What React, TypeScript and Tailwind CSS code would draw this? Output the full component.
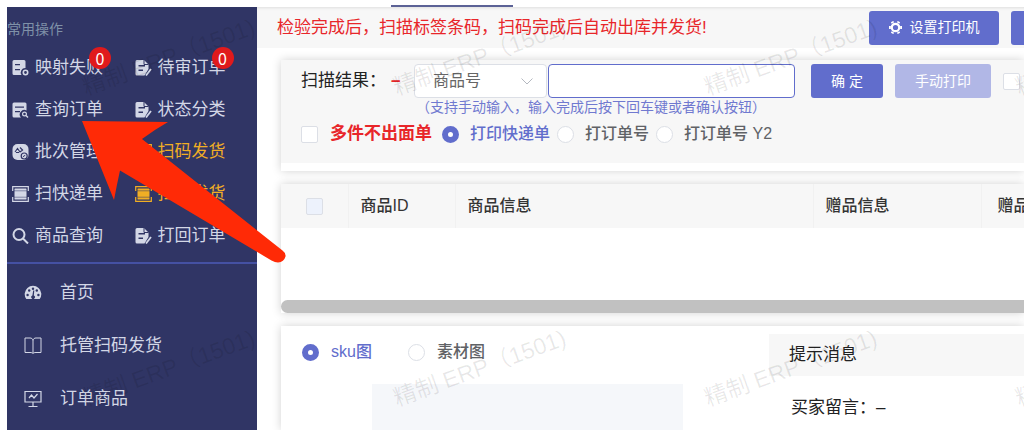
import { ReactNode, useState } from 'react';

type IconName = 'mapping' | 'order' | 'search-doc' | 'batch' | 'scan' | 'search';

interface QuickLink {
  label: string;
  icon: IconName;
  badge?: number;
  highlight?: boolean;
}

const quickLinks: QuickLink[] = [
  { label: '映射失败', icon: 'mapping', badge: 0 },
  { label: '待审订单', icon: 'order', badge: 0 },
  { label: '查询订单', icon: 'search-doc' },
  { label: '状态分类', icon: 'order' },
  { label: '批次管理', icon: 'batch' },
  { label: '扫码发货', icon: 'scan', highlight: true },
  { label: '扫快递单', icon: 'scan' },
  { label: '扫描发货', icon: 'scan', highlight: true },
  { label: '商品查询', icon: 'search' },
  { label: '打回订单', icon: 'order' },
];

const printModes = ['打印快递单', '打订单号', '打订单号 Y2'];

const quickIcons: Record<IconName, ReactNode> = {
  mapping: (
    <>
      <path fill="currentColor" fillRule="evenodd" d="M2 0h10a1.5 1.5 0 0 1 1.5 1.5V8a4.5 4.5 0 0 0-4 7H2A1.5 1.5 0 0 1 .5 13.5V1.5A1.5 1.5 0 0 1 2 0Zm1 4v1.2h5V4Zm0 5v1.2h5V9Z" />
      <circle cx="13.5" cy="12.5" r="2.2" fill="none" stroke="currentColor" strokeWidth="1.6" />
    </>
  ),
  order: (
    <>
      <path fill="currentColor" fillRule="evenodd" d="M2 0h7l4.5 4.5V9L9.5 15.5H2A1.5 1.5 0 0 1 .5 14V1.5A1.5 1.5 0 0 1 2 0Zm1.5 5v1.4H10V5Zm0 4.5v1.4H8V9.5Z" />
      <path d="M9 0v4.5h4.5" fill="none" stroke="#303565" />
      <path d="m11 15.5 5-6.5" fill="none" stroke="currentColor" strokeWidth="1.8" />
    </>
  ),
  'search-doc': (
    <>
      <path fill="currentColor" fillRule="evenodd" d="M2 .5h11A1.5 1.5 0 0 1 14.5 2v6.5A4.5 4.5 0 0 0 9 15.5H2A1.5 1.5 0 0 1 .5 14V2A1.5 1.5 0 0 1 2 .5Zm1 4v1.3h9V4.5Zm0 4.5v1.3h5V9Z" />
      <circle cx="12.5" cy="12" r="1.9" fill="none" stroke="currentColor" strokeWidth="1.2" />
      <path d="m14 13.5 2 2" stroke="currentColor" strokeWidth="1.4" />
    </>
  ),
  batch: (
    <>
      <rect x="0.5" y="0" width="16" height="16" rx="5" fill="currentColor" />
      <path d="M3 8 5.5 4.5 8 8l2-1.5M4 8.5h3M8 3.5l3 3" fill="none" stroke="#303565" strokeWidth="1.1" />
      <circle cx="12.2" cy="12" r="3" fill="none" stroke="#303565" strokeWidth="1.2" />
      <path d="m11 12.7 2.3-1.5" stroke="#303565" />
    </>
  ),
  scan: (
    <>
      <path d="M.7 5V.7h15.6V5M.7 11v4.3h15.6V11" fill="none" stroke="currentColor" strokeWidth="1.2" />
      <rect x="2.5" y="2.5" width="12" height="11" rx="0.5" fill="currentColor" />
      <path d="M2 4.8h13M2 11.2h13" stroke="#303565" strokeWidth="0.5" />
    </>
  ),
  search: (
    <g fill="none" stroke="currentColor" strokeWidth="2">
      <circle cx="7" cy="6.5" r="5.5" />
      <path d="m11 10.5 5 5" />
    </g>
  ),
};

const menuItems: { label: string; icon: ReactNode }[] = [
  {
    label: '首页',
    icon: (
      <>
        <path fill="currentColor" d="M2.3 15A8.3 8.3 0 1 1 15.7 15Z" />
        <g fill="#303565">
          <circle cx="3.6" cy="11" r="1.2" />
          <circle cx="5.2" cy="6.5" r="1.2" />
          <circle cx="9" cy="4.7" r="1.2" />
          <circle cx="12.8" cy="6.5" r="1.2" />
          <circle cx="14.4" cy="11" r="1.2" />
          <path d="M9.2 6.5h1.1l-.5 5a1.8 1.8 0 1 1-1.4 0Z" />
        </g>
      </>
    ),
  },
  {
    label: '托管扫码发货',
    icon: (
      <path
        d="M9 3.5v13M9 3.5C8.5 1.5 7.5 1 6 1H1v14.5h5c1.5 0 2.5.3 3 1 .5-.7 1.5-1 3-1h5V1h-5c-1.5 0-2.5.5-3 2.5Z"
        fill="none"
        stroke="currentColor"
      />
    ),
  },
  {
    label: '订单商品',
    icon: (
      <path
        d="M1 1.500h16v10.500H1ZM9 12v4.500M4.500 16.500h9M5 8l2.500-3L10 8l3.500-4"
        fill="none"
        stroke="currentColor"
        strokeWidth="1.2"
      />
    ),
  },
];

const radioClass =
  'size-[17px] shrink-0 appearance-none rounded-full border border-[#dcdfe6] bg-white checked:border-[6px] checked:border-[#616dcc]';
const checkboxClass = 'size-[17px] shrink-0 appearance-none rounded-[2px] border border-[#dcdfe6] bg-white';
const cardClass = 'bg-white shadow-[0_0_9px_rgba(0,0,0,0.18)]';

function Sidebar() {
  return (
    <aside className="w-[250px] shrink-0 bg-[#303565] text-[17px] text-[#d3d7e6]">
      <section className="border-b-2 border-[#4551a3] pb-[5px]">
        <h2 className="pt-3 pb-2 text-[14px] leading-[20px] text-[#7f91a8]">常用操作</h2>
        <nav className="grid grid-cols-2 pl-[5px]">
          {quickLinks.map((link) => (
            <a
              key={link.label}
              href="#"
              className={`relative flex h-[42px] items-center gap-[6px] whitespace-nowrap ${link.highlight ? 'text-[#f0ae24]' : ''}`}
            >
              <svg viewBox="0 0 17 16" className="h-[16px] w-[17px] shrink-0">
                {quickIcons[link.icon]}
              </svg>
              {link.label}
              {link.badge !== undefined && (
                <span className="absolute top-0 left-[77px] flex size-[22px] items-center justify-center rounded-full bg-[#e01a1c] font-['Noto_Sans_CJK_SC',sans-serif] text-[16px] leading-none text-white">
                  {link.badge}
                </span>
              )}
            </a>
          ))}
        </nav>
      </section>
      <nav className="pt-[2px] pb-[3px]">
        {menuItems.map((item) => (
          <a key={item.label} href="#" className="flex h-[53px] items-center gap-[18px] pl-[17px]">
            <svg viewBox="0 0 18 18" className="size-[18px] shrink-0">
              {item.icon}
            </svg>
            {item.label}
          </a>
        ))}
      </nav>
    </aside>
  );
}

function PageHeader() {
  return (
    <header className="flex h-[41px] items-center bg-[#f7f7f7] pl-5 shadow-[inset_0_3px_3px_-2px_rgba(0,0,0,0.1)]">
      <p className="flex-1 text-[17px] whitespace-nowrap text-[#e8262a]">
        检验完成后，扫描标签条码，扫码完成后自动出库并发货!
      </p>
      <button className="mr-3 flex h-[34px] w-[130px] shrink-0 items-center justify-center gap-2 rounded-[3px] bg-[#616dcc] text-[14px] text-white">
        <svg viewBox="0 0 14 14" className="size-[13px]" fill="none" stroke="currentColor">
          <circle cx="7" cy="7" r="4" strokeWidth="2.4" />
          <path d="M4.2 2.2 3.3.7M9.8 2.2l.9-1.5M12 7h2M9.8 11.8l.9 1.5M4.2 11.8l-.9 1.5M2 7H0" strokeWidth="3" />
        </svg>
        设置打印机
      </button>
      <button aria-label="更多" className="h-[34px] w-[13px] shrink-0 rounded-l-[3px] bg-[#616dcc]" />
    </header>
  );
}

function ScanForm() {
  const [mode, setMode] = useState(printModes[0]);

  return (
    <form className={cardClass} onSubmit={(e) => e.preventDefault()}>
      <div className="bg-[#f7f7f7] pt-1 pr-1 pb-3 pl-5">
        <div className="flex h-[34px] items-center">
          <label htmlFor="scan" className="w-[90px] shrink-0 text-[17px] whitespace-nowrap text-[#222]">
            扫描结果：
          </label>
          <span className="w-[23px] shrink-0 text-[17px] font-bold text-[#e8262a]">–</span>
          <div className="relative w-[133px] shrink-0">
            <select aria-label="类型" className="h-[34px] w-full appearance-none rounded-[4px] border border-[#dcdfe6] bg-white pl-[18px] text-[16px] text-[#666]">
              <option>商品号</option>
            </select>
            <svg viewBox="0 0 12 7" className="pointer-events-none absolute top-[14px] right-[14px] h-[7px] w-[12px]">
              <path d="m.5.5 5.5 5.5L11.5.5" fill="none" stroke="#b4b8c0" />
            </svg>
          </div>
          <input
            id="scan"
            type="text"
            className="ml-px h-[34px] min-w-0 flex-1 rounded-[4px] border border-[#616dcc] bg-white px-3 text-[16px] outline-none"
          />
          <button type="submit" className="ml-4 h-[34px] w-[72px] shrink-0 rounded-[3px] bg-[#616dcc] text-[14px] text-white">
            确 定
          </button>
          <button type="button" className="mx-3 h-[34px] w-[96px] shrink-0 rounded-[3px] bg-[#b1b7e6] text-[14px] text-white">
            手动打印
          </button>
          <input type="checkbox" aria-label="自动打印" className={checkboxClass} />
        </div>
        <p className="pl-[115px] text-[14px] leading-[19px] text-[#7079d0]">
          （支持手动输入，输入完成后按下回车键或者确认按钮）
        </p>
        <div className="flex h-[34px] items-center text-[16px] whitespace-nowrap text-[#606266]">
          <label className="mr-[10px] flex items-center gap-3 text-[17px] font-bold text-[#e8262a]">
            <input type="checkbox" className={checkboxClass} />
            多件不出面单
          </label>
          {printModes.map((item) => (
            <label
              key={item}
              className={`mr-[7px] flex items-center gap-[11px] font-medium ${mode === item ? 'text-[#616dcc]' : ''}`}
            >
              <input type="radio" name="mode" className={radioClass} checked={mode === item} onChange={() => setMode(item)} />
              {item}
            </label>
          ))}
        </div>
      </div>
      <div className="h-2" />
    </form>
  );
}

function GoodsTable() {
  return (
    <section className={cardClass}>
      <table className="w-full table-fixed text-left text-[16px] text-[#333]">
        <thead>
          <tr className="h-[44px] bg-[#f7f7f7]">
            <th className="w-[67px] border-r border-[#f1f1f1] pl-[25px]">
              <input type="checkbox" aria-label="全选" className="block size-[17px] appearance-none rounded-[2px] border border-[#dcdfe6] bg-[#edf2fc]" />
            </th>
            <th className="w-[107px] border-r border-[#f1f1f1] pl-3 font-medium">商品ID</th>
            <th className="border-r border-[#f1f1f1] pl-3 font-medium">商品信息</th>
            <th className="w-[168px] border-r border-[#f1f1f1] pl-3 font-medium">赠品信息</th>
            <th className="w-[43px] overflow-hidden pl-4 font-medium whitespace-nowrap">赠品</th>
          </tr>
        </thead>
        <tbody>
          <tr className="h-[72px]">
            <td colSpan={5} />
          </tr>
        </tbody>
      </table>
      <div className="h-[13px] rounded-l-full bg-[#c1c1c1]" />
    </section>
  );
}

function DetailPanel() {
  const [view, setView] = useState('sku图');

  return (
    <section className={`flex flex-1 ${cardClass}`}>
      <div className="flex flex-1 flex-col">
        <div className="flex h-[58px] items-center gap-9 pb-[6px] pl-[21px] text-[16px] text-[#606266]">
          {['sku图', '素材图'].map((item) => (
            <label key={item} className={`flex items-center gap-3 font-medium ${view === item ? 'text-[#616dcc]' : ''}`}>
              <input type="radio" name="view" className={radioClass} checked={view === item} onChange={() => setView(item)} />
              {item}
            </label>
          ))}
        </div>
        <div className="mr-[86px] ml-[91px] flex-1 bg-[#f5f7fa]" />
      </div>
      <div className="w-[255px] shrink-0 pt-2 text-[17px] text-[#222]">
        <h3 className="bg-[#f7f7f7] pl-5 leading-[42px]">提示消息</h3>
        <p className="pt-[10px] pl-[22px] leading-[44px]">买家留言：–</p>
      </div>
    </section>
  );
}

function Watermark() {
  return (
    <div aria-hidden="true" className="pointer-events-none absolute inset-0 overflow-hidden">
      <div className="-mt-[98px] grid grid-cols-[repeat(4,311px)] pl-[13px]">
        {Array.from({ length: 8 }, (_, i) => (
          <div key={i} className="flex h-[311px] items-center justify-center">
            <span className="-rotate-20 text-[23px] whitespace-nowrap text-black/9">精制 ERP（1501)</span>
          </div>
        ))}
      </div>
    </div>
  );
}

export default function App() {
  return (
    <div className="relative overflow-hidden bg-white pb-[18px] pl-[7px] font-['Liberation_Sans','Noto_Sans_CJK_SC',sans-serif]">
      <div className="flex h-[7px] items-end pl-[384px]">
        <div className="h-[2px] w-[122px] bg-[#5c6296]" />
      </div>
      <div className="flex overflow-hidden">
        <Sidebar />
        <main className="flex min-w-0 flex-1 flex-col">
          <PageHeader />
          <div className="flex flex-1 flex-col gap-[13px] pt-3 pl-6">
            <ScanForm />
            <GoodsTable />
            <DetailPanel />
          </div>
        </main>
      </div>
      <Watermark />
      {/* pointer to 查询订单 */}
      <svg aria-hidden="true" viewBox="0 0 300 270" className="pointer-events-none absolute top-0 left-0 h-[270px] w-[300px]">
        <path
          d="M82 121 168 122Q154 130 142 139L282.5 250.5Q286 253 285.500 256.500Q284 262 278 262.500Q275 262.500 271.500 260.500L120 170.500Q117 184 114 200Z"
          fill="#ff2a06"
        />
      </svg>
    </div>
  );
}
